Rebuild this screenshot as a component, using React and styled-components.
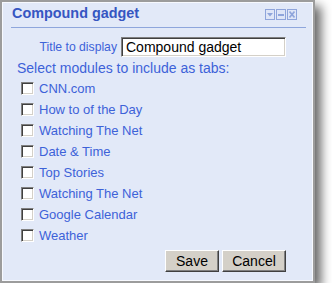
import React from "react";
import styled, { createGlobalStyle } from "styled-components";

const Global = createGlobalStyle`
  html, body { margin: 0; padding: 0; background: #ffffff; }
  body { font-family: Arial, "Liberation Sans", sans-serif; }
`;

const Frame = styled.div`
  box-sizing: border-box;
  width: 315px;
  height: 283px;
  border: 2px solid #9c9c9c;
  background: #e2e9f8;
  box-shadow: inset 0 0 0 1px #f7f9fe, 6px 6px 10px rgba(0, 0, 0, 0.6);
  padding: 0 7px 0 9px;
  display: flex;
  flex-direction: column;
`;

const Header = styled.div`
  height: 25px;
  display: flex;
  align-items: flex-start;
  justify-content: space-between;
`;

const Title = styled.div`
  margin: 2px 0 0 1px;
  font-size: 14.4px;
  line-height: 18px;
  font-weight: bold;
  color: #3656c2;
`;

const Icons = styled.div`
  display: flex;
  gap: 1px;
  margin: 7px 9px 0 0;
`;

const IconBox = styled.div`
  box-sizing: border-box;
  width: 10px;
  height: 11px;
  border: 1px solid #8fa5db;
  background: #dfe6f7;
  display: flex;
  align-items: center;
  justify-content: center;
  svg { display: block; }
`;

const Separator = styled.div`
  height: 1px;
  background: #8ea6dc;
`;

const FieldRow = styled.div`
  margin-top: 9px;
  display: flex;
  align-items: center;
  height: 20px;
`;

const FieldLabel = styled.label`
  width: 106px;
  margin-right: 4px;
  text-align: right;
  font-size: 12.2px;
  color: #3d62d8;
  white-space: nowrap;
`;

const TextInput = styled.input`
  box-sizing: border-box;
  width: 165px;
  height: 20px;
  margin: 0;
  padding: 0 0 0 4px;
  font-family: Arial, "Liberation Sans", sans-serif;
  font-size: 14px;
  line-height: 16px;
  color: #000;
  background: #fff;
  border: 1px solid;
  border-color: #808080 #ffffff #ffffff #808080;
  box-shadow: inset 1px 1px 0 #404040, inset -1px -1px 0 #d4d0c8;
  outline: none;
`;

const SectionLabel = styled.div`
  margin-top: 3px;
  padding-left: 6px;
  font-size: 14px;
  line-height: 16px;
  color: #3d62d8;
`;

const List = styled.div`
  margin-top: 2px;
  padding-left: 10px;
  display: flex;
  flex-direction: column;
`;

const Item = styled.label`
  height: 21px;
  display: flex;
  align-items: center;
  font-size: 13px;
  line-height: 21px;
  color: #3d62d8;
`;

const Box = styled.span`
  box-sizing: border-box;
  width: 13px;
  height: 13px;
  margin-right: 5px;
  background: #fff;
  border: 1px solid;
  border-color: #808080 #ffffff #ffffff #808080;
  box-shadow: inset 1px 1px 0 #404040, inset -1px -1px 0 #d4d0c8;
  flex: none;
`;

const Buttons = styled.div`
  margin-top: 4px;
  padding-right: 20px;
  display: flex;
  justify-content: flex-end;
  gap: 3px;
`;

const Button = styled.button`
  box-sizing: border-box;
  height: 22px;
  width: ${(p) => p.$w}px;
  margin: 0;
  padding: 0;
  font-family: Arial, "Liberation Sans", sans-serif;
  font-size: 14px;
  color: #000;
  background: #d4d0c8;
  border: 1px solid;
  border-color: #ffffff #404040 #404040 #ffffff;
  box-shadow: inset -1px -1px 0 #808080;
`;

const items = [
  "CNN.com",
  "How to of the Day",
  "Watching The Net",
  "Date & Time",
  "Top Stories",
  "Watching The Net",
  "Google Calendar",
  "Weather",
];

export default function App() {
  return (
    <>
      <Global />
      <Frame>
        <Header>
          <Title>Compound gadget</Title>
          <Icons>
            <IconBox>
              <svg width="6" height="4" viewBox="0 0 6 4">
                <path d="M0 0H6L3 3.5Z" fill="#8fa5db" />
              </svg>
            </IconBox>
            <IconBox>
              <svg width="6" height="2" viewBox="0 0 6 2">
                <rect x="0" y="0" width="6" height="2" fill="#8fa5db" />
              </svg>
            </IconBox>
            <IconBox>
              <svg width="6" height="7" viewBox="0 0 6 7">
                <path d="M0.5 0.5L5.5 6.5M5.5 0.5L0.5 6.5" stroke="#8fa5db" strokeWidth="1.6" />
              </svg>
            </IconBox>
          </Icons>
        </Header>
        <Separator />
        <FieldRow>
          <FieldLabel>Title to display</FieldLabel>
          <TextInput defaultValue="Compound gadget" />
        </FieldRow>
        <SectionLabel>Select modules to include as tabs:</SectionLabel>
        <List>
          {items.map((t, i) => (
            <Item key={i}>
              <Box />
              {t}
            </Item>
          ))}
        </List>
        <Buttons>
          <Button $w={54}>Save</Button>
          <Button $w={64}>Cancel</Button>
        </Buttons>
      </Frame>
    </>
  );
}
